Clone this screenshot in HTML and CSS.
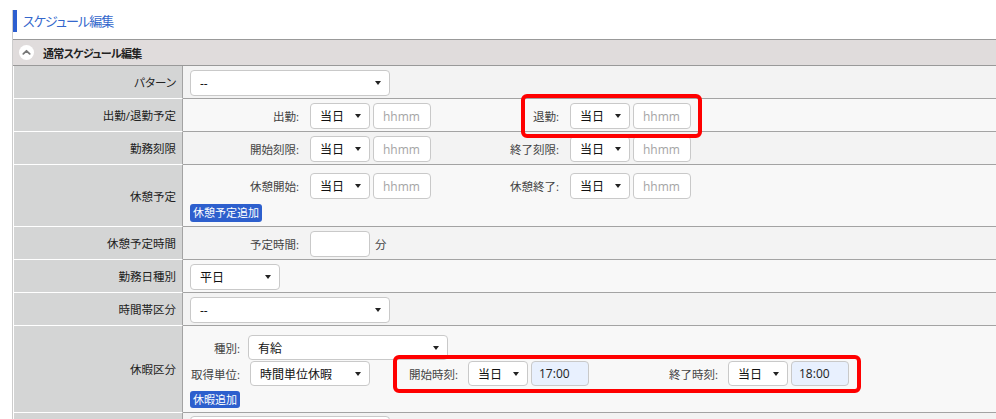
FILE: index.html
```html
<!DOCTYPE html>
<html lang="ja">
<head>
  <meta charset="UTF-8" />
  <meta name="viewport" content="width=device-width, initial-scale=1.0"/>
  <title>スケジュール編集</title>
  <link rel="stylesheet" href="styles.css">
</head>
<body>
  <div class="page">
    <h1 class="page-title">スケジュール編集</h1>

    <section class="panel">
      <div class="panel-head">
        <span class="toggle">
          <svg width="15" height="15" viewBox="0 0 15 15"><path d="M4.3 8.8 L7.5 5.8 L10.7 8.8" fill="none" stroke="#777" stroke-width="1.8" stroke-linecap="round" stroke-linejoin="round"/></svg>
        </span>
        通常スケジュール編集
      </div>

      <div class="form">
        <div class="row">
          <div class="label">パターン</div>
          <div class="value">
            <div class="select w200"><span>--</span><i class="caret"></i></div>
          </div>
        </div>

        <div class="row">
          <div class="label">出勤/退勤予定</div>
          <div class="value">
            <div class="tgroup">
              <span class="tlabel">出勤:</span>
              <div class="select w60"><span>当日</span><i class="caret"></i></div>
              <input class="time" type="text" placeholder="hhmm">
            </div>
            <div class="tgroup">
              <span class="tlabel">退勤:</span>
              <div class="select w60"><span>当日</span><i class="caret"></i></div>
              <input class="time" type="text" placeholder="hhmm">
            </div>
          </div>
        </div>

        <div class="row">
          <div class="label">勤務刻限</div>
          <div class="value">
            <div class="tgroup">
              <span class="tlabel">開始刻限:</span>
              <div class="select w60"><span>当日</span><i class="caret"></i></div>
              <input class="time" type="text" placeholder="hhmm">
            </div>
            <div class="tgroup">
              <span class="tlabel">終了刻限:</span>
              <div class="select w60"><span>当日</span><i class="caret"></i></div>
              <input class="time" type="text" placeholder="hhmm">
            </div>
          </div>
        </div>

        <div class="row">
          <div class="label">休憩予定</div>
          <div class="value stack rest">
            <div class="line">
              <div class="tgroup">
                <span class="tlabel">休憩開始:</span>
                <div class="select w60"><span>当日</span><i class="caret"></i></div>
                <input class="time" type="text" placeholder="hhmm">
              </div>
              <div class="tgroup">
                <span class="tlabel">休憩終了:</span>
                <div class="select w60"><span>当日</span><i class="caret"></i></div>
                <input class="time" type="text" placeholder="hhmm">
              </div>
            </div>
            <button class="btn" type="button">休憩予定追加</button>
          </div>
        </div>

        <div class="row">
          <div class="label">休憩予定時間</div>
          <div class="value">
            <div class="tgroup">
              <span class="tlabel">予定時間:</span>
              <input class="time w60" type="text">
              <span class="unit">分</span>
            </div>
          </div>
        </div>

        <div class="row">
          <div class="label">勤務日種別</div>
          <div class="value">
            <div class="select w90"><span>平日</span><i class="caret"></i></div>
          </div>
        </div>

        <div class="row">
          <div class="label">時間帯区分</div>
          <div class="value">
            <div class="select w200"><span>--</span><i class="caret"></i></div>
          </div>
        </div>

        <div class="row">
          <div class="label">休暇区分</div>
          <div class="value stack leave">
            <div class="line">
              <span class="flabel kind">種別:</span>
              <div class="select w200 short"><span>有給</span><i class="caret"></i></div>
            </div>
            <div class="line unit-line">
              <span class="flabel">取得単位:</span>
              <div class="select w120 short"><span>時間単位休暇</span><i class="caret"></i></div>
              <div class="tgroup">
                <span class="tlabel">開始時刻:</span>
                <div class="select w60 short"><span>当日</span><i class="caret"></i></div>
                <input class="time filled short" type="text" value="17:00">
              </div>
              <div class="tgroup">
                <span class="tlabel">終了時刻:</span>
                <div class="select w60 short"><span>当日</span><i class="caret"></i></div>
                <input class="time filled short" type="text" value="18:00">
              </div>
            </div>
            <button class="btn" type="button">休暇追加</button>
          </div>
        </div>

        <div class="row">
          <div class="label"></div>
          <div class="value tail">
            <div class="select w200"></div>
          </div>
        </div>
      </div>
    </section>
  </div>

  <div class="mark mark-shift"></div>
  <div class="mark mark-leave"></div>
</body>
</html>
```

FILE: styles.css
```css
html, body {
  margin: 0;
  padding: 0;
}

body {
  position: relative;
  font-family: "Open Sans", "Noto Sans CJK JP", sans-serif;
  font-feature-settings: "palt";
  font-size: 11px;
  color: #222;
  background: #fff;
  overflow: hidden;
  height: 419px;
}

.page {
  margin-left: 12px;
  border-left: 1px solid #ccc;
  min-height: 419px;
}

.page-title {
  margin: 10px 0 7px 0;
  height: 22px;
  border-left: 4px solid #2d5fd0;
  padding-left: 6px;
  font-size: 13px;
  letter-spacing: -0.9px;
  font-weight: normal;
  line-height: 22px;
  color: #3467cc;
}

/* panel header */
.panel-head {
  display: flex;
  align-items: center;
  height: 25px;
  padding-left: 6px;
  background: #e0dcdc;
  border-top: 1px solid #999;
  border-bottom: 1px solid #999;
  font-weight: bold;
  font-size: 11px;
  letter-spacing: -0.7px;
  color: #222;
}

.toggle {
  display: flex;
  align-items: center;
  justify-content: center;
  width: 15px;
  height: 15px;
  border-radius: 50%;
  background: #fff;
  margin-right: 9px;
}

/* form rows */
.row {
  display: grid;
  grid-template-columns: 170px 1fr;
}

.label {
  display: flex;
  align-items: center;
  justify-content: flex-end;
  padding-right: 6px;
  background: #d4d5d5;
  border-left: 1px solid #fff;
  border-right: 1px solid #a3a3a3;
  border-bottom: 1px solid #fff;
  color: #222;
  font-size: 11.5px;
}

.value {
  display: flex;
  align-items: center;
  min-height: 26px;
  padding: 4px 7px 2px 7px;
  border-bottom: 1px solid #a3a3a3;
  background: #f3f3f3;
}

.row:nth-child(even) .value {
  background: #f8f8f8;
}

.value.stack {
  flex-direction: column;
  align-items: flex-start;
}

.value.tail {
  padding-top: 3px;
}

.rest {
  padding-top: 8px;
  padding-bottom: 4px;
}

.leave {
  padding-top: 9px;
  padding-bottom: 4px;
}

.line {
  display: flex;
  align-items: center;
}

.unit-line {
  margin-top: 1px;
}

/* label + day select + time input */
.tgroup {
  display: flex;
  align-items: center;
}

.tlabel {
  width: 109px;
  margin-right: 11px;
  text-align: right;
  font-size: 11.5px;
  color: #444;
}

.tgroup + .tgroup .tlabel {
  width: 128px;
}

.leave .tlabel {
  width: 88px;
  margin-right: 10px;
}

.leave .tgroup + .tgroup .tlabel {
  width: 129px;
}

.flabel {
  width: 50px;
  margin-right: 10px;
  text-align: right;
  font-size: 11.5px;
  color: #444;
}

.flabel.kind {
  margin-right: 8px;
}

.unit {
  margin-left: 5px;
  font-size: 11.5px;
  color: #444;
}

/* controls */
.select {
  position: relative;
  box-sizing: border-box;
  height: 26px;
  display: flex;
  align-items: center;
  padding-left: 9px;
  background: #fff;
  border: 1px solid #c9c9c9;
  border-radius: 4px;
  color: #111;
  font-size: 12px;
}

.select.short,
.time.short {
  height: 25px;
}

.caret {
  position: absolute;
  right: 8px;
  top: 50%;
  margin-top: -2px;
  width: 0;
  height: 0;
  border-left: 3.5px solid transparent;
  border-right: 3.5px solid transparent;
  border-top: 4px solid #222;
}

.w60 { width: 60px; }
.w90 { width: 90px; }
.w120 { width: 120px; }
.w200 { width: 200px; }

.time {
  box-sizing: border-box;
  width: 58px;
  height: 26px;
  margin: 0 0 0 3px;
  padding: 0 0 0 9px;
  border: 1px solid #c9c9c9;
  border-radius: 4px;
  background: #fff;
  font-family: inherit;
  font-size: 12px;
  color: #222;
  outline: none;
}

.time.w60 {
  width: 60px;
  margin-left: 0;
}

.time::placeholder {
  color: #a5a5a5;
}

.time.filled {
  background: #e8f0fe;
  padding-left: 7px;
}

.btn {
  margin-top: 5px;
  height: 18px;
  padding: 0 3px;
  border: none;
  border-radius: 3px;
  background: #2d5fcd;
  color: #fff;
  font-family: inherit;
  font-size: 11px;
  line-height: 18px;
  cursor: pointer;
}

.leave .btn {
  height: 17px;
  line-height: 17px;
}

/* annotation boxes */
.mark {
  position: absolute;
  box-sizing: border-box;
  border: 4px solid #f00;
  border-radius: 6px;
}

.mark-shift {
  left: 521px;
  top: 94px;
  width: 181px;
  height: 44px;
}

.mark-leave {
  left: 393px;
  top: 355px;
  width: 468px;
  height: 38px;
}
```
